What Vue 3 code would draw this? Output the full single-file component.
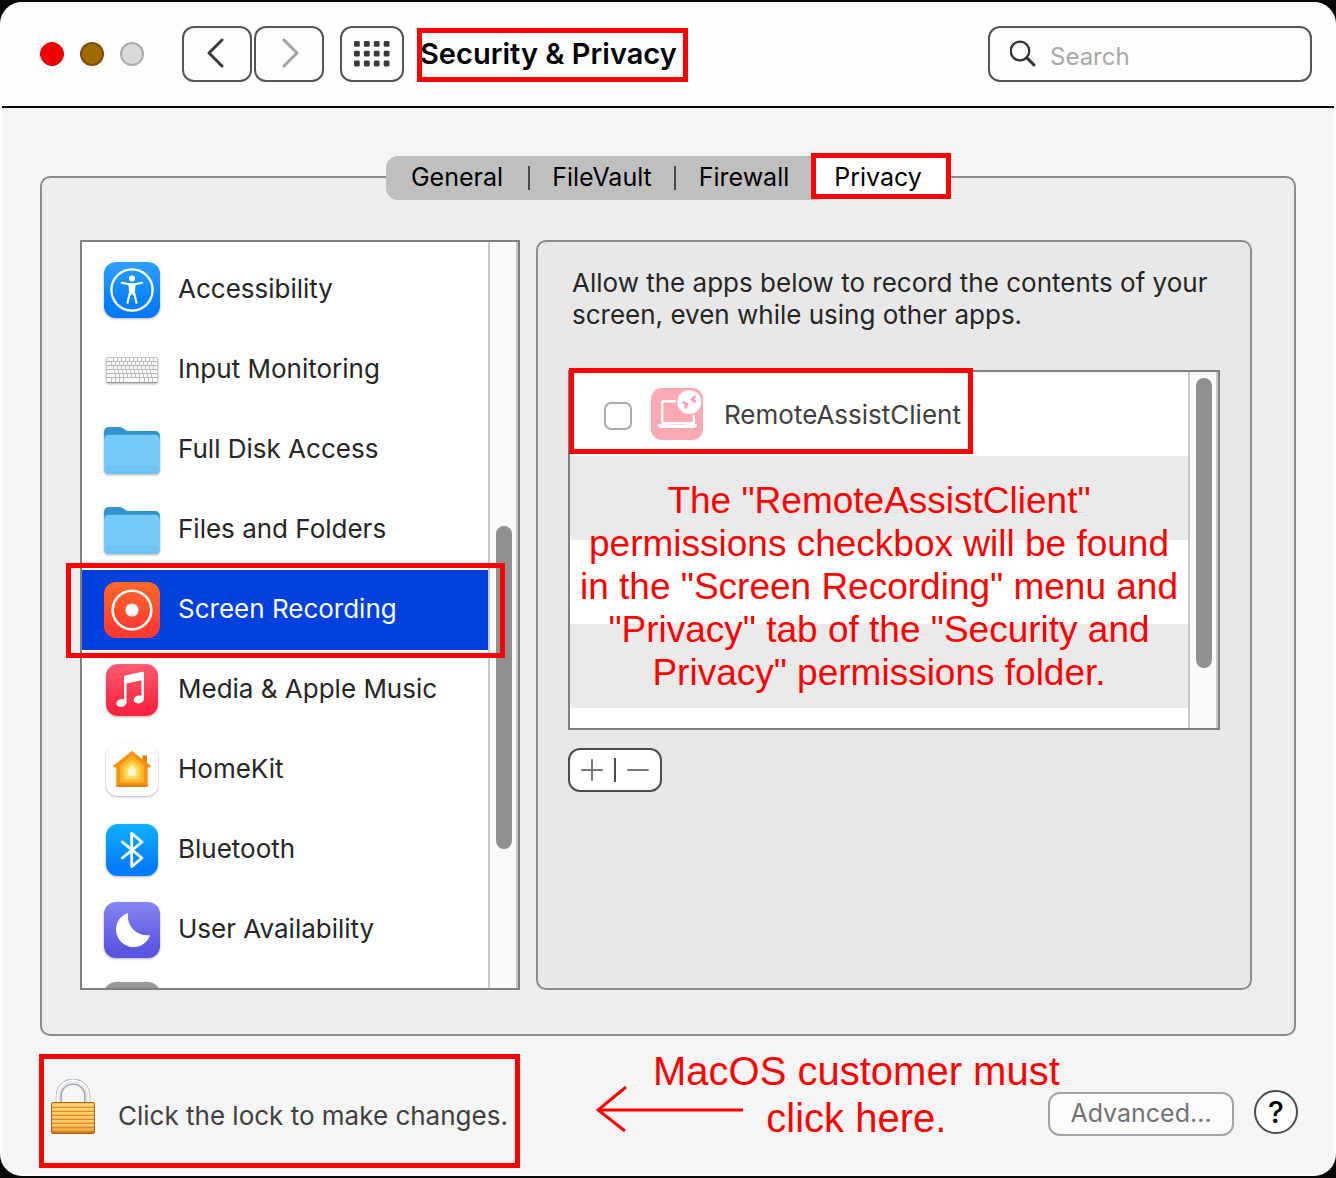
<template>
  <div class="window">
    <header class="toolbar">
      <div class="traffic">
        <button type="button" class="light close" aria-label="Close"></button>
        <button type="button" class="light minimize" aria-label="Minimize"></button>
        <button type="button" class="light zoom" aria-label="Zoom" disabled></button>
      </div>
      <nav class="nav">
        <button type="button" class="tool" aria-label="Back">
          <svg width="20" height="32" viewBox="0 0 20 32">
            <path d="M15 3 2 16l13 13" fill="none" stroke="#3a3a3a" stroke-width="3" stroke-linecap="round" stroke-linejoin="round" />
          </svg>
        </button>
        <button type="button" class="tool" aria-label="Forward" disabled>
          <svg width="20" height="32" viewBox="0 0 20 32">
            <path d="M5 3l13 13L5 29" fill="none" stroke="#a3a3a3" stroke-width="3" stroke-linecap="round" stroke-linejoin="round" />
          </svg>
        </button>
      </nav>
      <button type="button" class="tool show-all" aria-label="Show all">
        <svg width="36" height="26" viewBox="0 0 36 26">
          <template v-for="row in 3" :key="row">
            <rect
              v-for="col in 4"
              :key="col"
              :x="(col - 1) * 9.9"
              :y="(row - 1) * 9.8"
              width="5.8"
              height="5.8"
              rx="1.4"
              fill="#3a3a3a"
            />
          </template>
        </svg>
      </button>
      <h1 class="title">Security &amp; Privacy<span class="mark mark-title"></span></h1>
      <label class="search">
        <svg width="28" height="28" viewBox="0 0 28 28">
          <circle cx="10" cy="11" r="9.3" fill="none" stroke="#333" stroke-width="2.3" />
          <path d="M16.8 17.8l7.2 7.2" stroke="#333" stroke-width="3" stroke-linecap="round" />
        </svg>
        <input v-model="query" type="search" placeholder="Search" aria-label="Search" />
      </label>
    </header>

    <main class="content">
      <div class="tabs" role="tablist">
        <template v-for="(tab, i) in tabs" :key="tab">
          <button
            type="button"
            role="tab"
            class="tab"
            :class="{ active: tab === activeTab }"
            :aria-selected="tab === activeTab"
            @click="activeTab = tab"
          >
            {{ tab }}<span v-if="tab === 'Privacy'" class="mark mark-tab"></span>
          </button>
          <span v-if="i < 2" class="tab-sep"></span>
        </template>
      </div>

      <section class="panel">
        <div class="sidebar">
          <ul class="services">
            <li v-for="item in services" :key="item.icon">
              <button
                type="button"
                class="service"
                :class="{ selected: item.name === selected }"
                @click="selected = item.name"
              >
                <svg class="service-icon" :class="{ flat: item.icon === 'record' }" width="56" height="56" viewBox="0 0 56 56">
                  <defs>
                    <linearGradient v-if="item.colors" :id="`g-${item.icon}`" x1="0" y1="0" x2="0" y2="1">
                      <stop offset="0" :stop-color="item.colors[0]" />
                      <stop offset="0.85" :stop-color="item.colors[1]" />
                    </linearGradient>
                  </defs>
                  <rect
                    v-if="item.colors"
                    :x="item.inset"
                    :y="item.inset"
                    :width="56 - item.inset * 2"
                    :height="56 - item.inset * 2"
                    rx="12"
                    :fill="`url(#g-${item.icon})`"
                  />

                  <g v-if="item.icon === 'access'" fill="none" stroke="#fff" stroke-linecap="round">
                    <circle cx="28" cy="28" r="20.6" stroke-width="2.3" />
                    <circle cx="28" cy="16.4" r="3" fill="#fff" stroke="none" />
                    <path d="M17.8 20.8l7 1.4h6.4l7-1.4" stroke-width="2.1" />
                    <path d="M24.3 21.4h7.4l-.8 8.6.6 3-2.4.6L28 31.6l-1.1 2-2.4-.6.6-3z" fill="#fff" stroke="none" />
                    <path d="M25.8 31.6l-2.3 9.2M30.2 31.6l2.3 9.2" stroke-width="2.2" />
                  </g>

                  <g v-else-if="item.icon === 'keyboard'">
                    <rect x="2.5" y="15.5" width="51" height="25" rx="1.5" fill="#fafafa" stroke="#c6c6c6" />
                    <path d="M3 19.5h50M3 23.5h50M3 27.5h50M3 31.5h50M3 35.5h50" stroke="#b4b4b4" stroke-width="1" />
                    <path :d="keyLines" stroke="#c0c0c0" stroke-width="1" />
                    <path d="M3 40.5h50" stroke="#959595" stroke-width="1" />
                  </g>

                  <g v-else-if="item.icon === 'disk' || item.icon === 'files'">
                    <path d="M0 11C0 7 2 5 5.500 5H15c5 0 5.500 4 10 4h25.500c3.500 0 5.500 2 5.500 5.500V30H0z" fill="#2f93cd" />
                    <path d="M0 20c0-5 1-7.300 6-7.300h44c5 0 6 2.300 6 7.300v26c0 4-2 6-6 6H6c-4 0-6-2-6-6z" fill="#72cbf9" />
                    <path d="M0 44.500h56V46c0 4-2 6-6 6H6c-4 0-6-2-6-6z" fill="#6dc5f4" />
                    <path d="M2.500 45h51" stroke="#65bbea" stroke-width=".8" />
                  </g>

                  <g v-else-if="item.icon === 'record'">
                    <circle cx="28" cy="28" r="19.300" fill="none" stroke="#fff" stroke-width="2.600" />
                    <circle cx="28" cy="28" r="6.600" fill="#fff" />
                  </g>

                  <g v-else-if="item.icon === 'music'" fill="#fff">
                    <path d="M20 15.200c0-1 .5-1.600 1.500-1.800l17-3.600c1-.2 1.500.2 1.500 1.100V37.500h-2.500V18.300L22.500 21.500V41H20z" />
                    <ellipse cx="17.400" cy="41" rx="5.200" ry="3.900" transform="rotate(-14 17.400 41)" />
                    <ellipse cx="34.900" cy="37.400" rx="5.200" ry="3.900" transform="rotate(-14 34.900 37.400)" />
                  </g>

                  <g v-else-if="item.icon === 'home'">
                    <path d="M38.500 13.500h4.500v9h-4.500z" fill="#e07f0c" />
                    <path d="M28 9l18.500 14.500c.6 1.200 0 1.900-1 1.900H43.700V44.700H12.300V25.400h-1.800c-1 0-1.600-.7-1-1.900z" fill="#f7920f" />
                    <path d="M12.300 43h31.400v1.700H12.300z" fill="#e27a05" />
                    <path d="M28 13.500L40 23v17.800H16V23z" fill="#fbb02a" />
                    <path d="M28 17.500l9 7.200v13.600H19V24.700z" fill="#fdc93b" />
                    <path d="M28 20.600l6.500 5.400v10.300h-13V26z" fill="#fedc66" />
                    <path d="M28 23.800l3.700 3.200v6.700h-7.400V27z" fill="#fff8cf" />
                  </g>

                  <path
                    v-else-if="item.icon === 'bluetooth'"
                    d="M18.300 20L38 36 27.700 44.600V11.400L38 20 18.300 36"
                    fill="none"
                    stroke="#fff"
                    stroke-width="2.800"
                    stroke-linecap="round"
                    stroke-linejoin="round"
                  />

                  <path
                    v-else-if="item.icon === 'moon'"
                    d="M23.200 11.200Q24.200 10.600 24 12A19 19 0 0 0 44.400 33.200Q46.200 32.800 45.600 34.400A17.500 17.500 0 1 1 23.200 11.200z"
                    fill="#fff"
                  />
                </svg>
                <span>{{ item.name }}</span>
                <span v-if="item.name === 'Screen Recording'" class="mark mark-service"></span>
              </button>
            </li>
          </ul>
          <div class="track"><div class="thumb thumb-services"></div></div>
        </div>

        <div class="detail">
          <p class="description">Allow the apps below to record the contents of your screen, even while using other apps.</p>
          <div class="apps">
            <div class="app-rows">
              <label class="app">
                <input v-model="allowed" type="checkbox" class="check" />
                <svg width="52" height="52" viewBox="0 0 52 52">
                  <rect width="52" height="52" rx="11" fill="#fbaab3" />
                  <path
                    d="M24 13.200H13c-1.200 0-1.800.6-1.800 1.800v18.500c0 1.200.6 1.800 1.800 1.800h28c1.200 0 1.800-.6 1.800-1.800V28"
                    fill="none"
                    stroke="#fff"
                    stroke-width="2.400"
                    stroke-linecap="round"
                  />
                  <path d="M6.500 36h11c.6 0 1 .9 1.800.9h14c.8 0 1.200-.9 1.800-.9h11c0 2.500-1.400 4-4 4H10.500c-2.600 0-4-1.500-4-4z" fill="#fff" />
                  <circle cx="38.300" cy="14" r="12" fill="#fff" />
                  <path d="M31.800 13.800l4.200 2.400-2.200 4.200M44.400 7.800l-3.400 3.600 3.800 2.400" fill="none" stroke="#f7a0aa" stroke-width="2.600" />
                </svg>
                <span>RemoteAssistClient</span>
                <span class="mark mark-app"></span>
              </label>
              <p class="note">
                <span v-for="line in noteLines" :key="line">{{ line }}</span>
              </p>
            </div>
            <div class="track"><div class="thumb thumb-apps"></div></div>
          </div>
          <div class="add-remove">
            <button type="button" aria-label="Add">
              <svg width="22" height="22" viewBox="0 0 22 22"><path d="M11 1v20M1 11h20" stroke="#777" stroke-width="2" stroke-linecap="round" /></svg>
            </button>
            <span class="divider"></span>
            <button type="button" aria-label="Remove">
              <svg width="22" height="22" viewBox="0 0 22 22"><path d="M1 11h20" stroke="#777" stroke-width="2" stroke-linecap="round" /></svg>
            </button>
          </div>
        </div>
      </section>
    </main>

    <footer class="footer">
      <button type="button" class="lock">
        <svg width="46" height="56" viewBox="0 0 46 56">
          <defs>
            <linearGradient id="brass" x1="0" y1="0" x2="0" y2="1">
              <stop offset="0" stop-color="#fbc35c" />
              <stop offset="1" stop-color="#f3a63d" />
            </linearGradient>
          </defs>
          <path d="M8.800 24V16.500a14.200 13.700 0 0 1 28.400 0V24" fill="none" stroke="#8f9ba3" stroke-width="6" />
          <path d="M8.400 24V16.500a14.600 14 0 0 1 29.200 0V24" fill="none" stroke="#dfe7ec" stroke-width="4.400" />
          <path d="M7.600 24V16.500a15.400 14.700 0 0 1 30.800 0V24" fill="none" stroke="#fff" stroke-width="1.400" />
          <rect x="1.500" y="23.500" width="43" height="31" rx="1.500" fill="url(#brass)" stroke="#a8640f" />
          <path d="M2 28.500h42M2 32.500h42M2 36.500h42M2 40.500h42M2 44.500h42M2 48.500h42" stroke="#d68f2e" stroke-width="1.200" />
          <path d="M2 26h42M2 30h42M2 34h42M2 38h42M2 42h42M2 46h42" stroke="#ffe08c" stroke-width="1" />
          <path d="M2 53h42" stroke="#bf731b" stroke-width="1.600" />
        </svg>
        <span>Click the lock to make changes.</span>
      </button>
      <p class="hint">
        <svg class="arrow" width="148" height="48" viewBox="0 0 148 48">
          <path d="M147 25H2M30 2L2 25l27 21" fill="none" stroke="#fe0000" stroke-width="3" />
        </svg>
        <span>MacOS customer must</span>
        <span>click here.</span>
      </p>
      <div class="actions">
        <button type="button" class="advanced" disabled>Advanced...</button>
        <button type="button" class="help" aria-label="Help">?</button>
      </div>
    </footer>
  </div>
</template>

<script setup>
import { ref } from 'vue';

const query = ref('');
const allowed = ref(false);
const activeTab = ref('Privacy');
const selected = ref('Screen Recording');

const tabs = ['General', 'FileVault', 'Firewall', 'Privacy'];

// inset is the gap between the 56px icon box and the coloured tile
const services = [
  { name: 'Accessibility', icon: 'access', colors: ['#2fa0ff', '#007aff'], inset: 0 },
  { name: 'Input Monitoring', icon: 'keyboard' },
  { name: 'Full Disk Access', icon: 'disk' },
  { name: 'Files and Folders', icon: 'files' },
  { name: 'Screen Recording', icon: 'record', colors: ['#ff692a', '#ff3b32'], inset: 0 },
  { name: 'Media & Apple Music', icon: 'music', colors: ['#fb5c74', '#fa2540'], inset: 2 },
  { name: 'HomeKit', icon: 'home', colors: ['#ffffff', '#ffffff'], inset: 2 },
  { name: 'Bluetooth', icon: 'bluetooth', colors: ['#10b0ff', '#007aff'], inset: 2 },
  { name: 'User Availability', icon: 'moon', colors: ['#8586f2', '#5a56e0'], inset: 0 },
  { name: '', icon: 'more', colors: ['#98989b', '#7d7d80'], inset: 0 },
];

const noteLines = [
  'The "RemoteAssistClient"',
  'permissions checkbox will be found',
  'in the "Screen Recording" menu and',
  '"Privacy" tab of the "Security and',
  'Privacy" permissions folder.',
];

// Key separators, one offset per keyboard row
const keyRows = [9, 7, 9, 10, 11];
const keyLines = keyRows
  .map((start, row) => {
    let d = '';
    for (let x = start; x < 50 - (row % 2) * 2; x += 4) {
      d += `M${x + 0.5} ${16 + row * 4}v4`;
    }
    return d;
  })
  .join('') + 'M7.5 36v4M11.500 36v4M15.500 36v4M19.500 36v4M35.500 36v4M40.500 36v4M44.500 36v4M48.500 36v4';
</script>

<style>
html {
  background: #08080a;
}

body {
  margin: 0;
}
</style>

<style scoped>
.window {
  box-sizing: border-box;
  margin: 2px 0;
  border: 2px solid #fdfdfd;
  border-top: 0;
  border-radius: 22px;
  background: #f5f5f5;
  color: #262626;
  font-family: Inter, 'Liberation Sans', sans-serif;
  font-size: 26px;
}

button,
input {
  font: inherit;
  color: inherit;
}

button {
  margin: 0;
  padding: 0;
  border: 0;
  background: none;
}

svg {
  display: block;
  flex: none;
}

h1,
p,
ul {
  margin: 0;
  padding: 0;
}

/* red annotation frame */
.mark {
  position: absolute;
  z-index: 3;
  border: 5px solid #fe0000;
  pointer-events: none;
}

/* toolbar */
.toolbar {
  display: flex;
  align-items: center;
  padding: 24px 22px 24px 38px;
  border-bottom: 2px solid #000;
  border-radius: 20px 20px 0 0;
  background: #fdfdfd;
}

.traffic {
  display: flex;
  gap: 16px;
  margin-right: 38px;
}

.light {
  box-sizing: border-box;
  width: 24px;
  height: 24px;
  border: 1px solid #d90000;
  border-radius: 50%;
  background: #ee0000;
}

.minimize {
  border: 2px solid #7f4c00;
  background: #9f6a00;
}

.zoom {
  border: 2px solid #ababab;
  background: #d9d9d9;
}

.nav {
  display: flex;
  gap: 2px;
  margin-right: 16px;
}

.tool {
  display: flex;
  align-items: center;
  justify-content: center;
  box-sizing: border-box;
  width: 70px;
  height: 56px;
  padding-bottom: 2px;
  border: 2px solid #555;
  border-radius: 12px;
}

.show-all {
  width: 64px;
  padding-bottom: 0;
}

.title {
  position: relative;
  margin-left: 16px;
  color: #000;
  font-size: 29px;
  font-weight: 600;
  line-height: 44px;
  white-space: nowrap;
}

.mark-title {
  inset: -4px -11px -6px -3px;
}

.search {
  display: flex;
  align-items: center;
  gap: 12px;
  box-sizing: border-box;
  width: 324px;
  height: 56px;
  margin-left: auto;
  padding: 0 20px;
  border: 2px solid #555;
  border-radius: 12px;
}

.search input {
  flex: 1;
  min-width: 0;
  padding: 4px 0 0;
  border: 0;
  outline: 0;
  background: none;
  font-size: 24px;
  appearance: none;
}

.search input::placeholder {
  color: #a9a9a9;
  opacity: 1;
}

/* tabs */
.content {
  padding: 48px 38px 0;
}

.tabs {
  position: relative;
  z-index: 1;
  display: grid;
  grid-template-columns: 142px 2px 144px 2px 136px 138px;
  align-items: center;
  width: max-content;
  height: 44px;
  margin: 0 auto -24px;
  border-radius: 12px;
  background: #bfbfbf;
  color: #000;
  font-size: 25px;
}

.tab {
  position: relative;
  height: 44px;
  padding-bottom: 2px;
}

.tab.active {
  padding-right: 6px;
  border-radius: 10px;
  background: #fff;
}

.tab-sep {
  height: 24px;
  background: #4a4a4a;
}

.mark-tab {
  inset: -3px -1px 1px -1px;
}

/* main panel */
.panel {
  display: flex;
  gap: 16px;
  padding: 62px 42px 44px 38px;
  border: 2px solid #8c8c8c;
  border-radius: 10px;
  background: #ededed;
}

.sidebar {
  display: flex;
  box-sizing: border-box;
  width: 440px;
  height: 750px;
  border: 2px solid #808080;
  background: #fff;
}

.services {
  flex: 1;
  padding-top: 8px;
  overflow-y: clip;
  list-style: none;
}

.service {
  position: relative;
  display: flex;
  align-items: center;
  gap: 18px;
  width: 100%;
  height: 80px;
  padding-left: 22px;
  text-align: left;
  white-space: nowrap;
}

.service span {
  padding-bottom: 4px;
}

.service.selected {
  background: #0040dd;
  color: #fff;
}

.service-icon {
  overflow: visible;
  filter: drop-shadow(0 1px 1px rgba(0, 0, 0, 0.3));
}

.service-icon.flat {
  filter: none;
}

.service .mark-service {
  inset: -7px -17px -8px -16px;
  padding: 0;
}

.track {
  box-sizing: border-box;
  width: 30px;
  padding: 0 4px 0 6px;
  border: solid #c8c8c8;
  border-width: 0 2px;
  background: #fafafa;
}

.thumb {
  width: 16px;
  border-radius: 8px;
  background: #909090;
}

.thumb-services {
  height: 323px;
  margin-top: 284px;
}

.thumb-apps {
  height: 290px;
  margin-top: 6px;
}

.detail {
  flex: 1;
  min-width: 0;
  padding: 25px 30px;
  border: 2px solid #8c8c8c;
  border-radius: 10px;
  background: #e8e8e8;
}

.description {
  padding: 0 4px;
  line-height: 32px;
}

.apps {
  display: flex;
  margin-top: 39px;
  border: 2px solid #808080;
}

.app-rows {
  flex: 1;
  min-height: 356px;
  background: repeating-linear-gradient(#fff 0 84px, #eaeaea 84px 168px);
}

.app {
  position: relative;
  display: flex;
  align-items: center;
  height: 84px;
  padding-left: 34px;
  color: #404040;
}

.app svg {
  margin: 0 21px 0 19px;
}

.check {
  box-sizing: border-box;
  width: 28px;
  height: 28px;
  margin: 4px 0 0;
  border: 2px solid #aaa;
  border-radius: 7px;
  background: #fff;
  appearance: none;
}

.check:checked {
  background: #0040dd;
}

.mark-app {
  inset: -4px auto 2px -1px;
  width: 394px;
}

.note {
  padding-top: 23px;
  color: #fe0000;
  font-family: 'Liberation Sans', Arial, sans-serif;
  font-size: 37px;
  line-height: 43px;
  text-align: center;
  white-space: nowrap;
}

.note span,
.hint span {
  display: block;
}

.add-remove {
  display: flex;
  align-items: center;
  box-sizing: border-box;
  width: 94px;
  height: 44px;
  margin-top: 18px;
  border: 2px solid #4c4c4c;
  border-radius: 12px;
  background: #fff;
}

.add-remove button {
  display: flex;
  flex: 1;
  justify-content: center;
}

.divider {
  width: 2px;
  height: 24px;
  background: #4c4c4c;
}

/* footer */
.footer {
  display: flex;
  align-items: flex-start;
  padding: 18px 36px 6px 37px;
}

.lock {
  display: flex;
  flex: none;
  align-items: center;
  gap: 22px;
  box-sizing: border-box;
  width: 481px;
  height: 114px;
  padding: 0 0 8px 6px;
  border: 5px solid #fe0000;
  color: #404040;
  white-space: nowrap;
}

.lock span {
  padding-top: 16px;
}

/* the text runs slightly over the Advanced button's column */
.hint {
  position: relative;
  margin: -6px -16px 0 133px;
  color: #fe0000;
  font-family: 'Liberation Sans', Arial, sans-serif;
  font-size: 40px;
  line-height: 47px;
  text-align: center;
  white-space: nowrap;
}

.arrow {
  position: absolute;
  top: 37px;
  left: -57px;
}

.actions {
  display: flex;
  align-items: center;
  gap: 20px;
  margin-top: 34px;
  margin-left: auto;
}

.advanced {
  box-sizing: border-box;
  width: 186px;
  height: 44px;
  margin-top: 4px;
  padding-bottom: 2px;
  border: 2px solid #a3a3a3;
  border-radius: 12px;
  background: #fbfbfb;
  color: #737373;
  font-size: 25px;
}

.help {
  box-sizing: border-box;
  width: 44px;
  height: 44px;
  border: 2px solid #4c4c4c;
  border-radius: 50%;
  background: #fff;
  color: #000;
  font-size: 30px;
  font-weight: 500;
  line-height: 40px;
}
</style>
